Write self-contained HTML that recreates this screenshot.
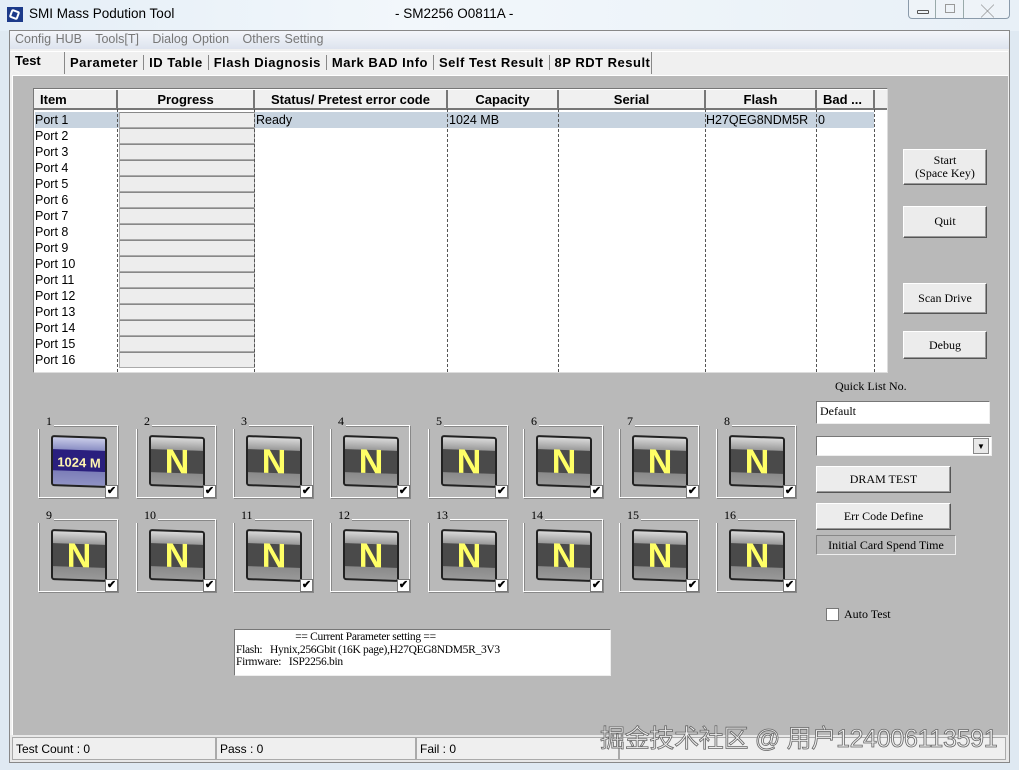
<!DOCTYPE html>
<html><head><meta charset="utf-8">
<style>
*{margin:0;padding:0;box-sizing:border-box}
body{width:1019px;height:770px;position:relative;overflow:hidden;background:#dfe9f2;font-family:"Liberation Sans","Noto Sans CJK SC",sans-serif;font-size:12px;color:#000}
.a{position:absolute}
.ser{font-family:"Liberation Serif","Noto Serif CJK SC",serif}
.btn{position:absolute;background:#ececec;border:1px solid;border-color:#fff #555 #555 #fff;box-shadow:inset -1px -1px 0 #999;text-align:center;font-family:"Liberation Serif",serif;font-size:12px;line-height:13px}
.row{position:absolute;left:35px;width:839px;height:16px;font-size:12.5px;line-height:16px}
.pc{position:absolute;left:84px;width:136px;top:0;height:16px;background:#ededed;border:1px solid #aaa;border-top-color:#888}
.card{position:absolute;width:80px;height:73px;border:1px solid #fff;box-shadow:inset 1px 1px 0 #888,1px 1px 0 #888}
.card .n{position:absolute;left:-1px;top:-12px;background:#b9b9b9;font-family:"Liberation Serif",serif;font-size:12px;padding:0 2px 0 8px}
.ic{position:absolute;left:12px;top:10px;width:56px;height:51px;border:2px solid #222;border-radius:3px;background:linear-gradient(#d9d9d9,#9a9a9a 25%,#4a4a4a 26%,#4a4a4a 74%,#8a8a8a 75%,#999);transform:skewY(2deg)}
.ic span{position:absolute;left:0;right:0;top:9px;text-align:center;color:#ffff66;font-weight:bold;font-size:34px;line-height:30px;font-family:"Liberation Sans",sans-serif}
.ck{position:absolute;right:-1px;bottom:-1px;width:13px;height:13px;background:#fff;border:1px solid #777;font-size:11px;line-height:11px;text-align:center;font-weight:bold}
.vl{position:absolute;top:109px;height:263px;border-left:1px dashed #555}
.hd{position:absolute;top:90px;height:20px;background:#f0f0f0;border-right:2px solid #777;border-bottom:2px solid #777;font-weight:bold;font-size:13px;line-height:19px;text-align:center}
.sb{position:absolute;top:737px;height:23px;background:#efefef;border:1px solid #aaa;font-size:12px;line-height:22px;padding-left:3px}
</style></head><body>
<div class="a" style="left:0;top:0;width:1019px;height:31px;background:linear-gradient(90deg,#e4eef7,#f2f7fb 40%,#e8f0f7)"></div>
<div class="a" style="left:7px;top:7px;width:16px;height:15px;background:#1c3a8a"><div style="position:absolute;left:3px;top:3px;width:9px;height:9px;border:2px solid #fff;border-radius:2px;transform:rotate(20deg)"></div></div>
<div class="a" style="left:29px;top:6px;font-size:13.5px">SMI Mass Podution Tool</div>
<div class="a" style="left:395px;top:6px;font-size:13.5px">- SM2256 O0811A -</div>
<div class="a" style="left:908px;top:0px;width:102px;height:19px;border:1px solid #8a9aaa;border-top:none;border-radius:0 0 4px 4px;background:#eef3f8"></div>
<div class="a" style="left:935px;top:0px;width:1px;height:18px;background:#9aa"></div>
<div class="a" style="left:963px;top:0px;width:1px;height:18px;background:#9aa"></div>
<div class="a" style="left:917px;top:10px;width:12px;height:4px;border:1px solid #555;border-radius:1px"></div>
<div class="a" style="left:945px;top:4px;width:10px;height:9px;border:1px solid #999"></div>
<div class="a" style="left:981px;top:1px;font-size:13px;color:#777">&#x2573;</div>
<div class="a" style="left:9px;top:30px;width:1001px;height:733px;background:#f0f0f0;border:1px solid #888"></div>
<div class="a" style="left:10px;top:31px;width:999px;height:18px;background:linear-gradient(#f4f6fa,#dde3ee)"></div>
<div class="a" style="left:15px;top:32px;font-size:12.5px;color:#777;word-spacing:1px">Config HUB &nbsp; Tools[T] &nbsp; Dialog Option &nbsp; Others Setting</div>
<div class="a" style="left:10px;top:51px;width:998px;height:1px;background:#fff"></div>
<div class="a" style="left:15px;top:53px;font-weight:bold;font-size:13px">Test</div>
<div class="a" style="left:64px;top:52px;width:588px;height:22px;border-left:1px solid #888;border-right:1px solid #888"></div>
<div class="a" style="left:70px;top:55px;font-weight:bold;font-size:13px;white-space:nowrap;letter-spacing:0.5px">Parameter<span style="border-left:1px solid #888;margin:0 5px"></span>ID Table<span style="border-left:1px solid #888;margin:0 5px"></span>Flash Diagnosis<span style="border-left:1px solid #888;margin:0 5px"></span>Mark BAD Info<span style="border-left:1px solid #888;margin:0 5px"></span>Self Test Result<span style="border-left:1px solid #888;margin:0 5px"></span>8P RDT Result</div>
<div class="a" style="left:12px;top:75px;width:996px;height:661px;background:#b9b9b9;border-top:1px solid #fff;border-left:1px solid #fff"></div>
<div class="a" style="left:33px;top:88px;width:855px;height:285px;background:#fff;border:1px solid #777;border-right-color:#ddd;border-bottom-color:#ddd"></div>
<div class="hd" style="left:34px;width:84px;text-align:left;padding-left:6px">Item</div>
<div class="hd" style="left:118px;width:137px">Progress</div>
<div class="hd" style="left:255px;width:193px">Status/ Pretest error code</div>
<div class="hd" style="left:448px;width:111px">Capacity</div>
<div class="hd" style="left:559px;width:147px">Serial</div>
<div class="hd" style="left:706px;width:111px">Flash</div>
<div class="hd" style="left:817px;width:58px;text-align:left;padding-left:6px">Bad ...</div>
<div class="hd" style="left:875px;width:12px;border-right:none"></div>
<div class="row" style="top:112px;background:#c7d3df"></div>
<div class="row" style="top:112px"><div class="pc"></div>Port 1<span class="a" style="left:221px">Ready</span><span class="a" style="left:414px">1024 MB</span><span class="a" style="left:671px">H27QEG8NDM5R</span><span class="a" style="left:783px">0</span></div>
<div class="row" style="top:128px"><div class="pc"></div>Port 2</div>
<div class="row" style="top:144px"><div class="pc"></div>Port 3</div>
<div class="row" style="top:160px"><div class="pc"></div>Port 4</div>
<div class="row" style="top:176px"><div class="pc"></div>Port 5</div>
<div class="row" style="top:192px"><div class="pc"></div>Port 6</div>
<div class="row" style="top:208px"><div class="pc"></div>Port 7</div>
<div class="row" style="top:224px"><div class="pc"></div>Port 8</div>
<div class="row" style="top:240px"><div class="pc"></div>Port 9</div>
<div class="row" style="top:256px"><div class="pc"></div>Port 10</div>
<div class="row" style="top:272px"><div class="pc"></div>Port 11</div>
<div class="row" style="top:288px"><div class="pc"></div>Port 12</div>
<div class="row" style="top:304px"><div class="pc"></div>Port 13</div>
<div class="row" style="top:320px"><div class="pc"></div>Port 14</div>
<div class="row" style="top:336px"><div class="pc"></div>Port 15</div>
<div class="row" style="top:352px"><div class="pc"></div>Port 16</div>
<div class="vl" style="left:117px"></div><div class="vl" style="left:254px"></div><div class="vl" style="left:447px"></div><div class="vl" style="left:558px"></div><div class="vl" style="left:705px"></div><div class="vl" style="left:816px"></div><div class="vl" style="left:874px"></div>
<div class="btn" style="left:903px;top:149px;width:84px;height:36px;padding-top:4px">Start<br>(Space Key)</div>
<div class="btn" style="left:903px;top:206px;width:84px;height:32px;line-height:29px">Quit</div>
<div class="btn" style="left:903px;top:283px;width:84px;height:31px;line-height:28px">Scan Drive</div>
<div class="btn" style="left:903px;top:331px;width:84px;height:28px;line-height:26px">Debug</div>
<div class="a ser" style="left:835px;top:379px;font-size:12px">Quick List No.</div>
<div class="a ser" style="left:816px;top:401px;width:174px;height:23px;background:#fff;border:1px solid;border-color:#777 #eee #eee #777;padding:2px 3px;font-size:12px">Default</div>
<div class="a" style="left:816px;top:436px;width:176px;height:20px;background:#fff;border:1px solid;border-color:#777 #eee #eee #777"></div>
<div class="a" style="left:973px;top:438px;width:16px;height:16px;background:#e8e8e8;border:1px solid #888;font-size:8px;text-align:center;line-height:15px">&#9660;</div>
<div class="btn" style="left:816px;top:466px;width:135px;height:27px;line-height:25px">DRAM TEST</div>
<div class="btn" style="left:816px;top:503px;width:135px;height:27px;line-height:25px">Err Code Define</div>
<div class="a ser" style="left:816px;top:535px;width:140px;height:20px;border:1px solid;border-color:#888 #eee #eee #888;text-align:center;line-height:18px">Initial Card Spend Time</div>
<div class="a" style="left:826px;top:608px;width:13px;height:13px;background:#fff;border:1px solid #777"></div>
<div class="a ser" style="left:844px;top:607px">Auto Test</div>
<div class="card" style="left:38px;top:425px"><div class="n">1</div><div class="ic" style="background:linear-gradient(#c9cce8,#8b8fc4 25%,#2a1f7e 26%,#2a1f7e 70%,#7c7eb8 71%,#8f92c4)"><span style="font-size:13px;top:18px;line-height:14px;color:#fff5b0">1024 M</span></div><div class="ck">&#10004;</div></div>
<div class="card" style="left:136px;top:425px"><div class="n">2</div><div class="ic"><span>N</span></div><div class="ck">&#10004;</div></div>
<div class="card" style="left:233px;top:425px"><div class="n">3</div><div class="ic"><span>N</span></div><div class="ck">&#10004;</div></div>
<div class="card" style="left:330px;top:425px"><div class="n">4</div><div class="ic"><span>N</span></div><div class="ck">&#10004;</div></div>
<div class="card" style="left:428px;top:425px"><div class="n">5</div><div class="ic"><span>N</span></div><div class="ck">&#10004;</div></div>
<div class="card" style="left:523px;top:425px"><div class="n">6</div><div class="ic"><span>N</span></div><div class="ck">&#10004;</div></div>
<div class="card" style="left:619px;top:425px"><div class="n">7</div><div class="ic"><span>N</span></div><div class="ck">&#10004;</div></div>
<div class="card" style="left:716px;top:425px"><div class="n">8</div><div class="ic"><span>N</span></div><div class="ck">&#10004;</div></div>
<div class="card" style="left:38px;top:519px"><div class="n">9</div><div class="ic"><span>N</span></div><div class="ck">&#10004;</div></div>
<div class="card" style="left:136px;top:519px"><div class="n">10</div><div class="ic"><span>N</span></div><div class="ck">&#10004;</div></div>
<div class="card" style="left:233px;top:519px"><div class="n">11</div><div class="ic"><span>N</span></div><div class="ck">&#10004;</div></div>
<div class="card" style="left:330px;top:519px"><div class="n">12</div><div class="ic"><span>N</span></div><div class="ck">&#10004;</div></div>
<div class="card" style="left:428px;top:519px"><div class="n">13</div><div class="ic"><span>N</span></div><div class="ck">&#10004;</div></div>
<div class="card" style="left:523px;top:519px"><div class="n">14</div><div class="ic"><span>N</span></div><div class="ck">&#10004;</div></div>
<div class="card" style="left:619px;top:519px"><div class="n">15</div><div class="ic"><span>N</span></div><div class="ck">&#10004;</div></div>
<div class="card" style="left:716px;top:519px"><div class="n">16</div><div class="ic"><span>N</span></div><div class="ck">&#10004;</div></div>
<div class="a ser" style="left:234px;top:629px;width:377px;height:47px;background:#fff;border:1px solid;border-color:#777 #eee #eee #777;font-size:11.5px;line-height:12.5px;padding:1px 1px;letter-spacing:-0.3px;white-space:pre">                       == Current Parameter setting ==
Flash:   Hynix,256Gbit (16K page),H27QEG8NDM5R_3V3
Firmware:   ISP2256.bin</div>
<div class="a" style="left:10px;top:735px;width:999px;height:27px;background:#e8e8e8"></div>
<div class="sb" style="left:12px;width:204px">Test Count : 0</div>
<div class="sb" style="left:216px;width:200px">Pass : 0</div>
<div class="sb" style="left:416px;width:203px">Fail : 0</div>
<div class="sb" style="left:619px;width:387px"></div>
<div class="a" style="left:600px;top:719px;font-size:25px;color:#eee;-webkit-text-stroke:0.8px #666;white-space:nowrap;letter-spacing:-0.3px">掘金技术社区 @ 用户124006113591</div>
</body></html>
